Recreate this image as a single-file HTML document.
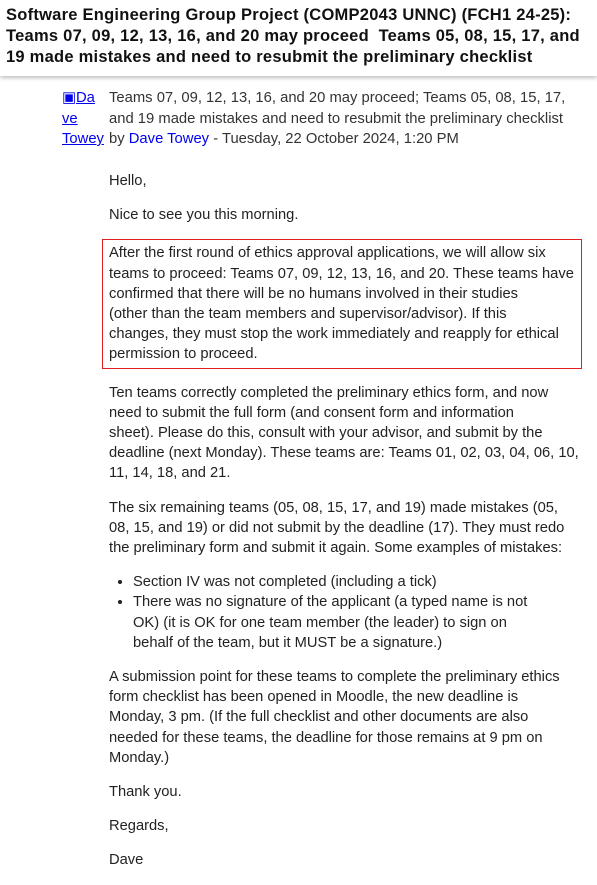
<!DOCTYPE html>
<html><head><meta charset="utf-8"><style>
body{margin:0;width:597px;height:868px;overflow:hidden;background:#fff;font-family:"Liberation Sans",sans-serif;color:#222;}
.hdr{position:absolute;left:0;top:0;width:597px;height:76px;background:#fff;box-shadow:0 2px 4px rgba(0,0,0,.25);}
.hdr h1{margin:0;padding:5px 6px;font-size:16.5px;line-height:21px;font-weight:bold;color:#111;white-space:nowrap;letter-spacing:0.25px;}
.meta{position:absolute;left:62px;top:88px;font-size:14.8px;line-height:20.5px;white-space:nowrap;}
.av{position:absolute;left:0;top:0;width:44px;color:#0000ee;text-decoration:underline;}
.mt{position:absolute;left:47px;top:0;width:480px;color:#333;}
a{color:#0000ee;}
.body{position:absolute;left:109px;top:171px;width:480px;font-size:14.7px;line-height:20.2px;color:#222;white-space:nowrap;}
p{margin:0 0 14px 0;}
.box{border:1.5px solid #e02020;margin-left:-7px;padding:3px 6px;width:466px;margin-bottom:14px;}
ul{margin:0 0 14px -16px;padding-left:40px;}
</style></head><body>
<div class="hdr"><h1>Software Engineering Group Project (COMP2043 UNNC) (FCH1 24-25):<br>Teams 07, 09, 12, 13, 16, and 20 may proceed&nbsp; Teams 05, 08, 15, 17, and<br>19 made mistakes and need to resubmit the preliminary checklist</h1></div>
<div class="meta">
<div class="av">&#9635;Da<br>ve<br>Towey</div>
<div class="mt">Teams 07, 09, 12, 13, 16, and 20 may proceed; Teams 05, 08, 15, 17,<br>and 19 made mistakes and need to resubmit the preliminary checklist<br>by <a>Dave Towey</a> - Tuesday, 22 October 2024, 1:20 PM</div>
</div>
<div class="body">
<p>Hello,</p>
<p>Nice to see you this morning.</p>
<div class="box">After the first round of ethics approval applications, we will allow six<br>teams to proceed: Teams 07, 09, 12, 13, 16, and 20. These teams have<br>confirmed that there will be no humans involved in their studies<br>(other than the team members and supervisor/advisor). If this<br>changes, they must stop the work immediately and reapply for ethical<br>permission to proceed.</div>
<p>Ten teams correctly completed the preliminary ethics form, and now<br>need to submit the full form (and consent form and information<br>sheet). Please do this, consult with your advisor, and submit by the<br>deadline (next Monday). These teams are: Teams 01, 02, 03, 04, 06, 10,<br>11, 14, 18, and 21.</p>
<p>The six remaining teams (05, 08, 15, 17, and 19) made mistakes (05,<br>08, 15, and 19) or did not submit by the deadline (17). They must redo<br>the preliminary form and submit it again. Some examples of mistakes:</p>
<ul><li>Section IV was not completed (including a tick)</li><li>There was no signature of the applicant (a typed name is not<br>OK) (it is OK for one team member (the leader) to sign on<br>behalf of the team, but it MUST be a signature.)</li></ul>
<p>A submission point for these teams to complete the preliminary ethics<br>form checklist has been opened in Moodle, the new deadline is<br>Monday, 3 pm. (If the full checklist and other documents are also<br>needed for these teams, the deadline for those remains at 9 pm on<br>Monday.)</p>
<p>Thank you.</p>
<p>Regards,</p>
<p>Dave</p>
</div>
</body></html>
